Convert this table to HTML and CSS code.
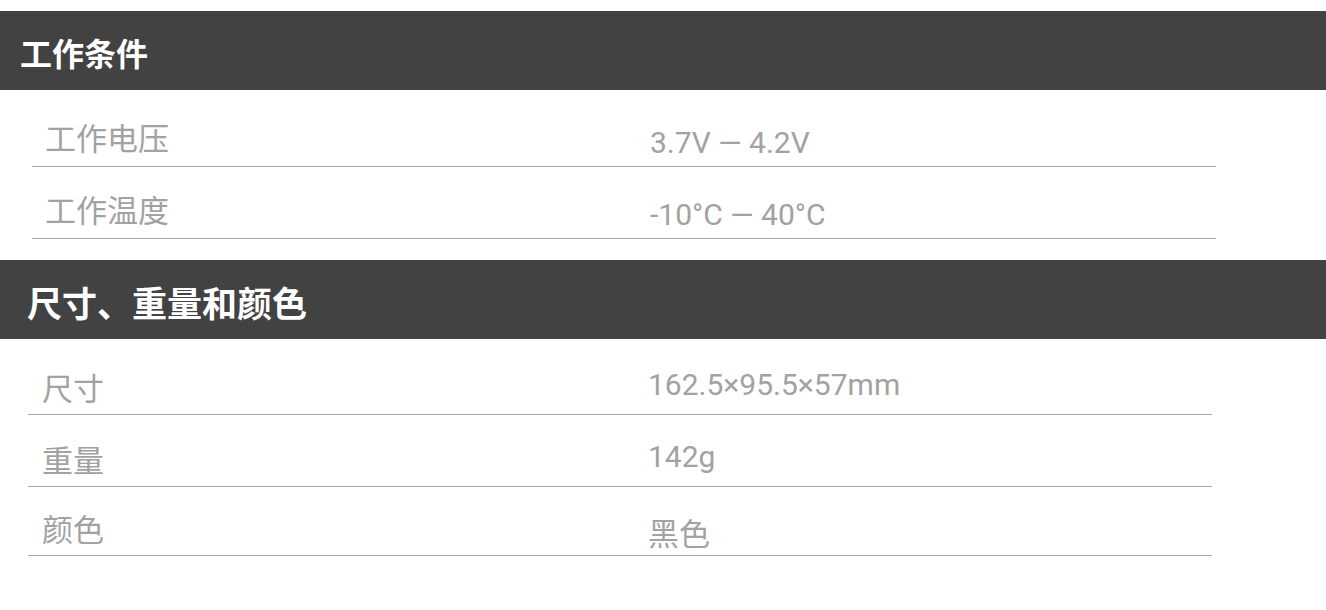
FILE: index.html
```html
<!DOCTYPE html>
<html lang="zh-CN">
<head>
    <meta charset="UTF-8">
    <meta name="viewport" content="width=device-width, initial-scale=1.0">
    <title>规格参数</title>
    <link rel="stylesheet" href="styles.css">
</head>
<body>
    <div class="specs">
        <section class="spec-section spec-section--power">
            <h2 class="spec-title">工作条件</h2>
            <div class="spec-list">
                <div class="spec-row">
                    <span class="spec-label">工作电压</span>
                    <span class="spec-value">3.7V — 4.2V</span>
                </div>
                <div class="spec-row">
                    <span class="spec-label">工作温度</span>
                    <span class="spec-value">-10°C — 40°C</span>
                </div>
            </div>
        </section>

        <section class="spec-section spec-section--size">
            <h2 class="spec-title">尺寸、重量和颜色</h2>
            <div class="spec-list">
                <div class="spec-row">
                    <span class="spec-label">尺寸</span>
                    <span class="spec-value">162.5×95.5×57mm</span>
                </div>
                <div class="spec-row">
                    <span class="spec-label">重量</span>
                    <span class="spec-value">142g</span>
                </div>
                <div class="spec-row">
                    <span class="spec-label">颜色</span>
                    <span class="spec-value spec-value--cjk">黑色</span>
                </div>
            </div>
        </section>
    </div>
</body>
</html>
```

FILE: styles.css
```css
body {
    margin: 0;
    padding: 0;
    background-color: #fff;
    font-family: "Noto Sans CJK SC", "Noto Sans", sans-serif;
    color: #a2a2a2;
}

.specs {
    padding-top: 11px;
}

.spec-section + .spec-section {
    margin-top: 21px;
}

.spec-title {
    display: flex;
    align-items: center;
    height: 79px;
    margin: 0;
    padding: 3px 0 0 20px;
    box-sizing: border-box;
    background-color: #424242;
    color: #fff;
    font-size: 32px;
    font-weight: bold;
    line-height: 1;
}

.spec-list {
    margin: 0 110px 0 32px;
    padding-top: 5px;
}

.spec-row {
    display: grid;
    grid-template-columns: 618px 1fr;
    align-items: end;
    height: 71px;
    border-bottom: 1px solid #a8a8a8;
}

.spec-label {
    padding: 0 0 14px 13px;
    font-size: 31px;
    line-height: 31px;
}

.spec-value {
    padding-bottom: 8px;
    font-family: Roboto, "Noto Sans CJK SC", sans-serif;
    font-size: 30px;
    line-height: 30px;
}

.spec-value--cjk {
    font-family: "Noto Sans CJK SC", sans-serif;
    font-size: 31px;
    line-height: 31px;
}

/* second block sits a few pixels further left */
.spec-section--size .spec-title {
    padding-left: 27px;
    font-size: 35px;
}

.spec-section--size .spec-list {
    margin: 0 114px 0 28px;
    padding-top: 4px;
}

.spec-section--size .spec-row {
    grid-template-columns: 620px 1fr;
}

.spec-section--size .spec-row:last-child {
    height: 68px;
}

.spec-section--size .spec-label {
    padding: 0 0 12px 14px;
}

.spec-section--size .spec-value {
    padding-bottom: 14px;
}

.spec-section--size .spec-value--cjk {
    padding-bottom: 8px;
}
```
